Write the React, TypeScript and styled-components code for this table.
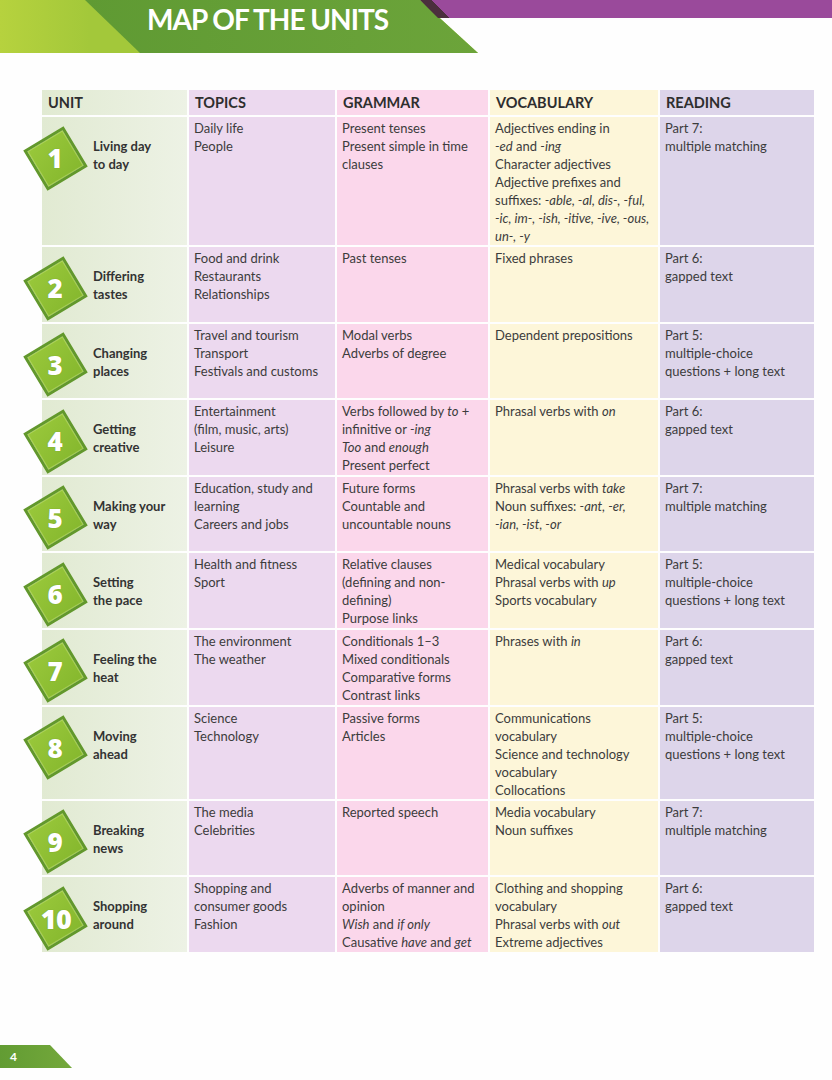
import * as React from 'react';
import styled, { createGlobalStyle } from 'styled-components';

type Col = 'unit' | 'topics' | 'grammar' | 'vocab' | 'reading';

const colBg: Record<Col, string> = {
  unit: 'linear-gradient(to right, #e1ead2, #edf2e5)',
  topics: '#ecd9ef',
  grammar: '#fbd7eb',
  vocab: '#fdf6d9',
  reading: '#ddd5ea',
};

type Line = React.ReactNode;

interface Unit {
  num: number;
  title: [string, string];
  topics: Line[];
  grammar: Line[];
  vocab: Line[];
  reading: Line[];
}

const units: Unit[] = [
  {
    num: 1,
    title: ['Living day', 'to day'],
    topics: ['Daily life', 'People'],
    grammar: ['Present tenses', 'Present simple in time', 'clauses'],
    vocab: [
      'Adjectives ending in',
      <><em>-ed</em> and <em>-ing</em></>,
      'Character adjectives',
      'Adjective prefixes and',
      <>suffixes: <em>-able, -al, dis-, -ful,</em></>,
      <em>-ic, im-, -ish, -itive, -ive, -ous,</em>,
      <em>un-, -y</em>,
    ],
    reading: ['Part 7:', 'multiple matching'],
  },
  {
    num: 2,
    title: ['Differing', 'tastes'],
    topics: ['Food and drink', 'Restaurants', 'Relationships'],
    grammar: ['Past tenses'],
    vocab: ['Fixed phrases'],
    reading: ['Part 6:', 'gapped text'],
  },
  {
    num: 3,
    title: ['Changing', 'places'],
    topics: ['Travel and tourism', 'Transport', 'Festivals and customs'],
    grammar: ['Modal verbs', 'Adverbs of degree'],
    vocab: ['Dependent prepositions'],
    reading: ['Part 5:', 'multiple-choice', 'questions + long text'],
  },
  {
    num: 4,
    title: ['Getting', 'creative'],
    topics: ['Entertainment', '(film, music, arts)', 'Leisure'],
    grammar: [
      <>Verbs followed by <em>to</em> +</>,
      <>infinitive or <em>-ing</em></>,
      <><em>Too</em> and <em>enough</em></>,
      'Present perfect',
    ],
    vocab: [<>Phrasal verbs with <em>on</em></>],
    reading: ['Part 6:', 'gapped text'],
  },
  {
    num: 5,
    title: ['Making your', 'way'],
    topics: ['Education, study and', 'learning', 'Careers and jobs'],
    grammar: ['Future forms', 'Countable and', 'uncountable nouns'],
    vocab: [
      <>Phrasal verbs with <em>take</em></>,
      <>Noun suffixes: <em>-ant, -er,</em></>,
      <em>-ian, -ist, -or</em>,
    ],
    reading: ['Part 7:', 'multiple matching'],
  },
  {
    num: 6,
    title: ['Setting', 'the pace'],
    topics: ['Health and fitness', 'Sport'],
    grammar: ['Relative clauses', '(defining and non-', 'defining)', 'Purpose links'],
    vocab: ['Medical vocabulary', <>Phrasal verbs with <em>up</em></>, 'Sports vocabulary'],
    reading: ['Part 5:', 'multiple-choice', 'questions + long text'],
  },
  {
    num: 7,
    title: ['Feeling the', 'heat'],
    topics: ['The environment', 'The weather'],
    grammar: ['Conditionals 1–3', 'Mixed conditionals', 'Comparative forms', 'Contrast links'],
    vocab: [<>Phrases with <em>in</em></>],
    reading: ['Part 6:', 'gapped text'],
  },
  {
    num: 8,
    title: ['Moving', 'ahead'],
    topics: ['Science', 'Technology'],
    grammar: ['Passive forms', 'Articles'],
    vocab: ['Communications', 'vocabulary', 'Science and technology', 'vocabulary', 'Collocations'],
    reading: ['Part 5:', 'multiple-choice', 'questions + long text'],
  },
  {
    num: 9,
    title: ['Breaking', 'news'],
    topics: ['The media', 'Celebrities'],
    grammar: ['Reported speech'],
    vocab: ['Media vocabulary', 'Noun suffixes'],
    reading: ['Part 7:', 'multiple matching'],
  },
  {
    num: 10,
    title: ['Shopping', 'around'],
    topics: ['Shopping and', 'consumer goods', 'Fashion'],
    grammar: [
      'Adverbs of manner and',
      'opinion',
      <><em>Wish</em> and <em>if only</em></>,
      <>Causative <em>have</em> and <em>get</em></>,
    ],
    vocab: ['Clothing and shopping', 'vocabulary', <>Phrasal verbs with <em>out</em></>, 'Extreme adjectives'],
    reading: ['Part 6:', 'gapped text'],
  },
];

const headings: [Col, string][] = [
  ['unit', 'UNIT'],
  ['topics', 'TOPICS'],
  ['grammar', 'GRAMMAR'],
  ['vocab', 'VOCABULARY'],
  ['reading', 'READING'],
];

const App = () => {
  const renderLines = (lines: Line[]) =>
    lines.map((line, i) => <TextLine key={i}>{line}</TextLine>);

  return (
    <>
      <GlobalStyle />
      <Page>
        <Banner>
          <GreenBand>
            <TitlePlate>
              <Title>MAP OF THE UNITS</Title>
            </TitlePlate>
          </GreenBand>
          <PurpleBar />
        </Banner>

        <Table>
          {headings.map(([col, label]) => (
            <HeadCell key={col} $col={col}>
              {label}
            </HeadCell>
          ))}
          {units.map((u) => (
            <React.Fragment key={u.num}>
              <UnitCell $col="unit">
                <UnitHead>
                  <Badge>
                    <Diamond />
                    <BadgeNum $wide={u.num > 9}>{u.num}</BadgeNum>
                  </Badge>
                  <UnitTitle>
                    <TextLine>{u.title[0]}</TextLine>
                    <TextLine>{u.title[1]}</TextLine>
                  </UnitTitle>
                </UnitHead>
              </UnitCell>
              <Cell $col="topics">{renderLines(u.topics)}</Cell>
              <Cell $col="grammar">{renderLines(u.grammar)}</Cell>
              <Cell $col="vocab">{renderLines(u.vocab)}</Cell>
              <Cell $col="reading">{renderLines(u.reading)}</Cell>
            </React.Fragment>
          ))}
        </Table>

        <PageTab>4</PageTab>
      </Page>
    </>
  );
};

const GlobalStyle = createGlobalStyle`
  *, *::before, *::after {
    box-sizing: border-box;
  }
  html, body {
    margin: 0;
    padding: 0;
    background: #fefefe;
  }
  body {
    font-family: Lato, "Noto Sans", sans-serif;
    color: #3a3a3a;
  }
`;

const Page = styled.div`
  display: flex;
  flex-direction: column;
  width: 832px;
  height: 1080px;
  overflow: hidden;
`;

const Banner = styled.header`
  display: flex;
  align-items: flex-start;
  height: 53px;
  flex-shrink: 0;
`;

const GreenBand = styled.div`
  display: flex;
  flex-shrink: 0;
  width: 478px;
  height: 53px;
  background: linear-gradient(to right, #b6d23e, #a3c83a 90px);
  clip-path: polygon(0 0, 420px 0, 100% 100%, 0 100%);
`;

const TitlePlate = styled.div`
  flex: 1;
  margin-left: 85px;
  padding: 3px 0 0 62px;
  background: linear-gradient(to right, #5f9a33, #6ca43a);
  clip-path: polygon(0 0, 100% 0, 100% 100%, 55px 100%);
`;

const Title = styled.h1`
  margin: 0;
  font-family: Lato, "DejaVu Sans", sans-serif;
  font-size: 28px;
  font-weight: 700;
  line-height: 32px;
  letter-spacing: -1px;
  color: #ffffff;
  white-space: nowrap;
`;

const PurpleBar = styled.div`
  flex: 1;
  height: 18px;
  margin-left: -58px;
  background: linear-gradient(45deg, #4b2f3d 0 21px, #9a4a9b 21px);
  clip-path: polygon(0 0, 100% 0, 100% 100%, 18px 100%);
`;

const Table = styled.div`
  display: grid;
  grid-template-columns: 145px 146px 151px 168px 154px;
  gap: 2px;
  width: 772px;
  margin: 37px 0 0 42px;
`;

const HeadCell = styled.div<{ $col: Col }>`
  display: flex;
  align-items: center;
  height: 25px;
  padding: 0 6px;
  background: ${(p) => colBg[p.$col]};
  font-size: 14.5px;
  font-weight: 700;
  color: #2e2e2e;
`;

const Cell = styled.div<{ $col: Col }>`
  min-height: 74.6px;
  padding: 2px 5px 0;
  background: ${(p) => colBg[p.$col]};
  font-size: 13px;
  line-height: 18px;
  color: #3c3c3c;

  em {
    font-style: italic;
  }
`;

const TextLine = styled.div`
  white-space: nowrap;
`;

const UnitCell = styled(Cell)`
  padding: 8px 0 0;
`;

const UnitHead = styled.div`
  display: flex;
  align-items: center;
  gap: 5px;
`;

const Badge = styled.div`
  display: grid;
  place-items: center;
  flex-shrink: 0;
  width: 66px;
  height: 66px;
  margin-left: -20px;
`;

const Diamond = styled.div`
  grid-area: 1 / 1;
  width: 47px;
  height: 47px;
  transform: rotate(-31deg);
  background: linear-gradient(160deg, #98c73a, #86b82e);
  border: 3px solid #62982c;
  box-shadow: inset 0 0 0 1px rgba(200, 230, 120, 0.5);
`;

const BadgeNum = styled.span<{ $wide: boolean }>`
  grid-area: 1 / 1;
  transform: translateX(${(p) => (p.$wide ? '1px' : '0')});
  font-family: "Open Sans", Lato, sans-serif;
  font-size: ${(p) => (p.$wide ? '27px' : '26px')};
  font-weight: 800;
  letter-spacing: ${(p) => (p.$wide ? '-0.5px' : '0')};
  line-height: 1;
  color: #ffffff;
  text-shadow: 0 0 1px rgba(60, 90, 20, 0.4);
`;

const UnitTitle = styled.div`
  margin-bottom: 6px;
  font-size: 13px;
  font-weight: 700;
  line-height: 18px;
  color: #333333;
`;

const PageTab = styled.div`
  display: flex;
  align-items: center;
  flex-shrink: 0;
  width: 72px;
  height: 23px;
  margin: auto 0 12px;
  padding-left: 10px;
  background: linear-gradient(to right, #629c33, #74a83b);
  clip-path: polygon(0 0, 50px 0, 100% 100%, 0 100%);
  font-size: 12px;
  font-weight: 700;
  color: #ffffff;
`;

export default App;
